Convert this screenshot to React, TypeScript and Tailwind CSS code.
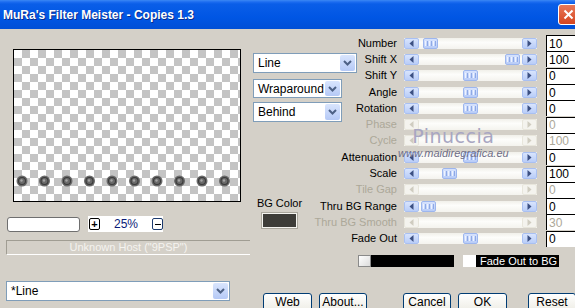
import React from "react";

type Row = { label: string; value: string; thumb: number | null };

const rows: Row[] = [
  { label: "Number", value: "10", thumb: 4 },
  { label: "Shift X", value: "100", thumb: 86 },
  { label: "Shift Y", value: "0", thumb: 44 },
  { label: "Angle", value: "0", thumb: 44 },
  { label: "Rotation", value: "0", thumb: 44 },
  { label: "Phase", value: "0", thumb: null },
  { label: "Cycle", value: "100", thumb: null },
  { label: "Attenuation", value: "0", thumb: 44 },
  { label: "Scale", value: "100", thumb: 23 },
  { label: "Tile Gap", value: "0", thumb: null },
  { label: "Thru BG Range", value: "0", thumb: 2 },
  { label: "Thru BG Smooth", value: "30", thumb: null },
  { label: "Fade Out", value: "0", thumb: 44 },
];

const font = "font-['Liberation_Sans',Arial,sans-serif]";

function Arrow({ dir, disabled }: { dir: "l" | "r"; disabled: boolean }) {
  return (
    <div
      className={
        "w-[15px] h-full shrink-0 rounded-[2px] border flex items-center justify-center " +
        (disabled
          ? "bg-[#f4f3ee] border-[#e8e6dc]"
          : "bg-[linear-gradient(180deg,#d8e4fd,#b9cdf8)] border-[#a9c0f2]")
      }
    >
      <svg width="5" height="7" viewBox="0 0 5 7">
        {dir === "l" ? (
          <path d="M4.5 0 L0.5 3.5 L4.5 7 Z" fill={disabled ? "#cfccc0" : "#3c5083"} />
        ) : (
          <path d="M0.5 0 L4.5 3.5 L0.5 7 Z" fill={disabled ? "#cfccc0" : "#3c5083"} />
        )}
      </svg>
    </div>
  );
}

function Slider({ thumb }: { thumb: number | null }) {
  const disabled = thumb === null;
  return (
    <div className="w-[133px] h-[11px] flex shrink-0 bg-[linear-gradient(180deg,#f1f0ea,#fdfdfb_40%,#f4f3ee)]">
      <Arrow dir="l" disabled={disabled} />
      <div className="flex-1 flex h-full">
        {!disabled && (
          <>
            <div className="shrink-0" style={{ width: thumb as number }} />
            <div className="w-[15px] h-full shrink-0 rounded-[2px] border border-[#9db6ee] bg-[linear-gradient(180deg,#d6e2fd,#b8ccf8)] flex items-center justify-center gap-[1px]">
              <div className="w-[1px] h-[5px] bg-[#eef3ff]" />
              <div className="w-[1px] h-[5px] bg-[#8ea9e6]" />
              <div className="w-[1px] h-[5px] bg-[#eef3ff]" />
              <div className="w-[1px] h-[5px] bg-[#8ea9e6]" />
              <div className="w-[1px] h-[5px] bg-[#eef3ff]" />
              <div className="w-[1px] h-[5px] bg-[#8ea9e6]" />
            </div>
          </>
        )}
      </div>
      <Arrow dir="r" disabled={disabled} />
    </div>
  );
}

function Chevron() {
  return (
    <svg width="9" height="6" viewBox="0 0 9 6">
      <path d="M1 1 L4.5 4.5 L8 1" stroke="#4d6185" strokeWidth="2" fill="none" />
    </svg>
  );
}

function Dropdown({ text, w }: { text: string; w: string }) {
  return (
    <div className={`${w} h-full bg-white border border-[#7f9db9] flex items-center`}>
      <span className="flex-1 pl-[4px] text-[12px] text-black leading-none">{text}</span>
      <div className="w-[15px] h-[calc(100%-2px)] mr-[1px] bg-[linear-gradient(180deg,#d9e5fd,#b5c9f6)] rounded-[2px] flex items-center justify-center">
        <Chevron />
      </div>
    </div>
  );
}

function Button({ text, w, ml }: { text: string; w: string; ml: string }) {
  return (
    <div
      className={`${w} ${ml} h-[23px] shrink-0 rounded-[3px] border border-[#003c74] bg-[linear-gradient(180deg,#ffffff,#f0efe8_70%,#e3e0d3)] flex items-start justify-center pt-[2px] text-[12px] leading-[12px] text-black`}
    >
      {text}
    </div>
  );
}

export default function App() {
  const dots = [22, 44.5, 67, 89.5, 112, 134.5, 157, 179.5, 202, 224.5];
  return (
    <div className={`relative w-[575px] h-[308px] overflow-hidden bg-[#d4d0c8] ${font}`}>
      {/* Title bar */}
      <div className="h-[29px] flex items-center bg-[linear-gradient(180deg,#3b88f4_0px,#1c6cf0_2px,#0a5ee8_4px,#0056e4_60%,#004fd6_100%)]">
        <span className="ml-[3px] text-white font-bold text-[12px] [text-shadow:1px_1px_#0b2c8a]">
          MuRa's Filter Meister - Copies 1.3
        </span>
        <div className="ml-auto mr-[-4px] w-[21px] h-[21px] rounded-[3px] border border-white bg-[linear-gradient(180deg,#e8795a,#d5451f)] flex items-center justify-center">
          <svg width="11" height="11" viewBox="0 0 11 11">
            <path d="M1.5 1.5 L9.5 9.5 M9.5 1.5 L1.5 9.5" stroke="white" strokeWidth="2" />
          </svg>
        </div>
      </div>

      <div className="flex">
        {/* Left column */}
        <div className="w-[250px] shrink-0 flex flex-col">
          <div className="ml-[13px] mt-[20px] w-[228px] h-[153px] border border-black relative bg-[conic-gradient(#c4c4c4_25%,#ffffff_0_50%,#c4c4c4_0_75%,#ffffff_0)] bg-[length:16px_16px]">
            <svg className="absolute left-0 top-0" width="226" height="151" viewBox="0 0 226 151">
              {dots.map((x, i) => (
                <g key={i}>
                  <circle cx={x - 14} cy={131} r={5.5} fill="#6a6a6a" />
                  <circle cx={x - 14} cy={131} r={3.5} fill="none" stroke="#3a3a3a" strokeWidth="1.1" />
                  <circle cx={x - 14.5} cy={130.5} r={1.2} fill="#a5a5a5" />
                </g>
              ))}
            </svg>
          </div>
          <div className="mt-[14px] flex items-center">
            <div className="ml-[7px] w-[73px] h-[15px] rounded-[3px] border border-[#6f6f6f] bg-white" />
            <div className="ml-[8px] w-[75px] h-[16px] bg-white flex items-center">
              <div className="ml-[1px] w-[12px] h-[12px] rounded-[2px] border border-black flex items-center justify-center text-[11px] leading-none font-bold">
                +
              </div>
              <span className="ml-[14px] text-[12px] text-[#0a1a78] leading-none">25%</span>
              <div className="ml-[14px] w-[12px] h-[12px] rounded-[2px] border border-[#1c3a6e] flex items-center justify-center">
                <div className="w-[6px] h-[1px] bg-black" />
              </div>
            </div>
          </div>
          <div className="ml-[6px] mt-[8px] w-[244px] h-[15px] border-t border-l border-[#a09d93] border-b border-b-white flex items-center justify-center text-[11px] text-[#f4f3ef] leading-none">
            Unknown Host ("9PSP")
          </div>
          <div className="ml-[6px] mt-[26px] h-[20px]">
            <Dropdown text="*Line" w="w-[224px]" />
          </div>
        </div>

        {/* Right area */}
        <div className="flex-1 flex flex-col">
          <div className="flex pt-[6px]">
            {/* Middle column */}
            <div className="ml-[3px] w-[104px] shrink-0 flex flex-col">
              <div className="mt-[18px] h-[20px]">
                <Dropdown text="Line" w="w-[104px]" />
              </div>
              <div className="mt-[6px] h-[19px]">
                <Dropdown text="Wraparound" w="w-[89px]" />
              </div>
              <div className="mt-[4px] h-[20px]">
                <Dropdown text="Behind" w="w-[89px]" />
              </div>
              <div className="mt-[75px] w-[53px] flex flex-col items-center">
                <span className="text-[11px] leading-[13px] text-black whitespace-nowrap">BG Color</span>
                <div className="mt-[3px] w-[35px] h-[15px] bg-[#3d3c38] border border-[#f4f3ef] outline outline-1 outline-[#a9a69c]" />
              </div>
            </div>
            {/* Slider rows */}
            <div className="flex flex-col">
              {rows.map((r) => {
                const dis = r.thumb === null;
                return (
                  <div key={r.label} className="h-[16.3px] flex items-center">
                    <div
                      className={
                        "w-[40px] shrink-0 flex justify-end whitespace-nowrap text-[11px] leading-none font-normal " +
                        (dis ? "text-[#aca899]" : "text-black")
                      }
                    >
                      <span>{r.label}</span>
                    </div>
                    <div className="ml-[7px]">
                      <Slider thumb={r.thumb} />
                    </div>
                    <div
                      className={
                        "ml-[9px] w-[40px] h-[16px] shrink-0 bg-white border-t border-l border-black flex items-center pl-[2px] text-[12px] leading-none " +
                        (dis ? "text-[#aca899]" : "text-black")
                      }
                    >
                      {r.value}
                    </div>
                  </div>
                );
              })}
            </div>
          </div>

          {/* colour bars */}
          <div className="mt-[8px] flex items-center">
            <div className="ml-[108px] w-[13px] h-[12px] border border-[#8a8a8a] bg-[linear-gradient(135deg,#ffffff,#dcdcdc)]" />
            <div className="w-[83px] h-[12px] bg-black" />
            <div className="ml-[9px] w-[13px] h-[12px] bg-white" />
            <div className="w-[83px] h-[12px] bg-black text-white text-[11px] leading-[12px] pl-[4px] whitespace-nowrap">
              Fade Out to BG
            </div>
          </div>

          {/* buttons */}
          <div className="mt-[26px] flex">
            <Button text="Web" w="w-[49px]" ml="ml-[13px]" />
            <Button text="About..." w="w-[48px]" ml="ml-[7px]" />
            <Button text="Cancel" w="w-[48px]" ml="ml-[36px]" />
            <Button text="OK" w="w-[49px]" ml="ml-[7px]" />
            <Button text="Reset" w="w-[48px]" ml="ml-[21px]" />
          </div>
        </div>
      </div>

      {/* Watermark */}
      <div className="absolute left-[398px] top-[126px] flex flex-col items-center pointer-events-none">
        <span className="text-[19px] leading-[20px] text-[#a8a6c2] font-['DejaVu_Sans',sans-serif] tracking-[0.5px]">
          Pinuccia
        </span>
        <span className="mt-[2px] text-[11px] leading-[11px] text-[#6e6d86] italic whitespace-nowrap">
          www.maidiregrafica.eu
        </span>
      </div>
    </div>
  );
}
